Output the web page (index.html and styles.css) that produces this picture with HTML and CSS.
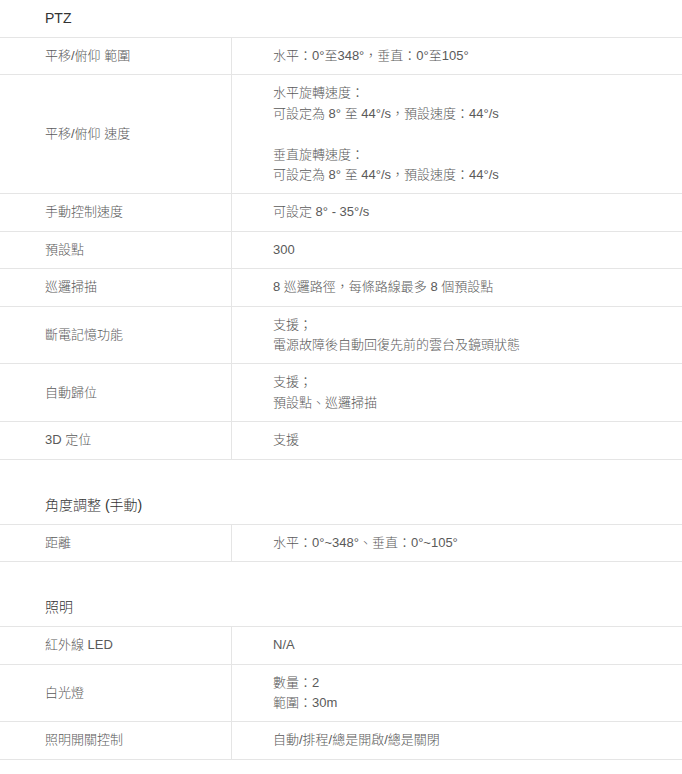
FILE: index.html
```html
<!DOCTYPE html>
<html lang="zh-Hant">
<head>
<meta charset="utf-8">
<title>PTZ 規格</title>
<link rel="stylesheet" href="styles.css">
</head>
<body>
<section class="spec">
  <h2 class="spec-title">PTZ</h2>
  <div class="spec-row"><div class="spec-key">平移/俯仰 範圍</div><div class="spec-val">水平：0°至348°，垂直：0°至105°</div></div>
  <div class="spec-row"><div class="spec-key">平移/俯仰 速度</div><div class="spec-val">水平旋轉速度：<br>可設定為 8° 至 44°/s，預設速度：44°/s<br><br>垂直旋轉速度：<br>可設定為 8° 至 44°/s，預設速度：44°/s</div></div>
  <div class="spec-row"><div class="spec-key">手動控制速度</div><div class="spec-val">可設定 8° - 35°/s</div></div>
  <div class="spec-row"><div class="spec-key">預設點</div><div class="spec-val">300</div></div>
  <div class="spec-row"><div class="spec-key">巡邏掃描</div><div class="spec-val">8 巡邏路徑，每條路線最多 8 個預設點</div></div>
  <div class="spec-row"><div class="spec-key">斷電記憶功能</div><div class="spec-val">支援；<br>電源故障後自動回復先前的雲台及鏡頭狀態</div></div>
  <div class="spec-row"><div class="spec-key">自動歸位</div><div class="spec-val">支援；<br>預設點、巡邏掃描</div></div>
  <div class="spec-row"><div class="spec-key">3D 定位</div><div class="spec-val">支援</div></div>
</section>
<section class="spec">
  <h2 class="spec-title">角度調整 (手動)</h2>
  <div class="spec-row"><div class="spec-key">距離</div><div class="spec-val">水平：0°~348°、垂直：0°~105°</div></div>
</section>
<section class="spec">
  <h2 class="spec-title">照明</h2>
  <div class="spec-row"><div class="spec-key">紅外線 LED</div><div class="spec-val">N/A</div></div>
  <div class="spec-row"><div class="spec-key">白光燈</div><div class="spec-val">數量：2<br>範圍：30m</div></div>
  <div class="spec-row"><div class="spec-key">照明開關控制</div><div class="spec-val">自動/排程/總是開啟/總是關閉</div></div>
</section>
</body>
</html>
```
FILE: styles.css
```css
html, body {
  margin: 0;
  padding: 0;
  background: #fff;
}
body {
  font-family: "Liberation Sans", "Noto Sans CJK TC", sans-serif;
  font-size: 13px;
  font-weight: 300;
  color: #5a5a5a;
}
.spec + .spec {
  margin-top: 27px;
}
.spec-title {
  margin: 0;
  padding: 8px 45px;
  font-size: 14px;
  font-weight: 300;
  line-height: 21px;
  color: #333;
  border-bottom: 1px solid #e5e5e5;
}
.spec-row {
  display: grid;
  grid-template-columns: 232px 1fr;
  border-bottom: 1px solid #e5e5e5;
}
.spec-key,
.spec-val {
  display: flex;
  align-items: center;
  padding: 8px 0;
  line-height: 20.4px;
}
.spec-key {
  padding-left: 45px;
  border-right: 1px solid #e5e5e5;
}
.spec-val {
  padding-left: 41px;
}
```
